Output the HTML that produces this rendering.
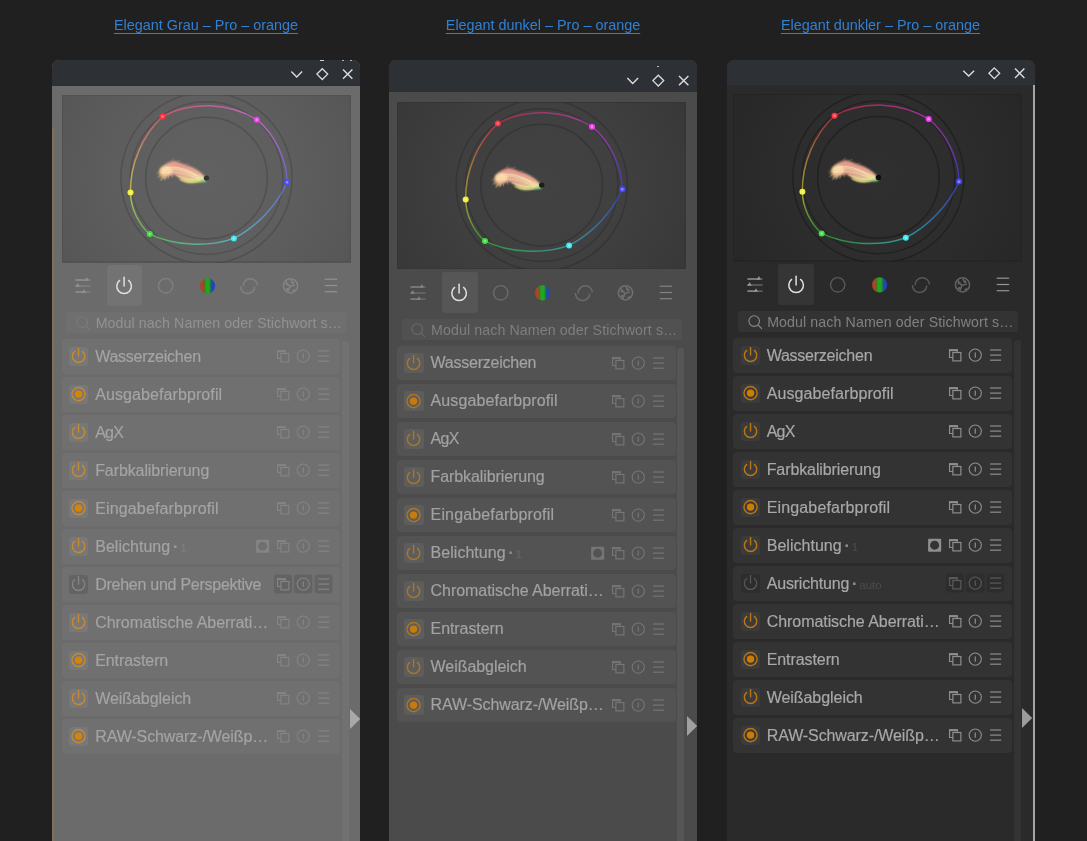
<!DOCTYPE html><html lang="de"><head><meta charset="utf-8"><title>darktable themes</title><style>
html,body{margin:0;padding:0}
body{width:1087px;height:841px;overflow:hidden;position:relative;background:#202020;font-family:"Liberation Sans", sans-serif}
.abs{position:absolute}
.cap{position:absolute;top:16.9px;font-size:14.4px;line-height:17px;color:#3080d4;text-decoration:underline;text-decoration-thickness:1px;text-underline-offset:3.1px;white-space:nowrap;transform:translateX(-50%);filter:blur(0.3px)}
.panel{position:absolute;top:59.6px;width:308px;height:790px;border-radius:7px 7px 0 0;overflow:hidden}
.tb{position:absolute;left:0;top:0;width:100%;background:#2d3136}
.content{position:absolute;width:400px;height:900px;filter:blur(0.3px)}
.tbi{}
.hist{position:absolute;display:block}
.lbl{font-size:16px;line-height:20px;white-space:nowrap;-webkit-text-stroke:0.18px currentColor}
.sub{font-size:11.5px;letter-spacing:0;margin-left:-0.6px}
.dot{font-family:'DejaVu Sans',sans-serif;font-size:13px;letter-spacing:-0.75px;font-weight:bold;position:relative;top:-1.2px;margin-left:-1.2px}
.stxt{font-size:14.2px;line-height:17px;white-space:nowrap;letter-spacing:0.1px}
svg{overflow:visible}
</style></head><body><a class="cap" style="left:206px">Elegant Grau – Pro – orange</a><a class="cap" style="left:543px">Elegant dunkel – Pro – orange</a><a class="cap" style="left:880.5px">Elegant dunkler – Pro – orange</a><div class="panel" style="left:52px;background:#6b6b6b"><div class="tb" style="height:26.0px"></div><svg class="abs tbi" style="left:230px;top:0" width="78" height="26.0" viewBox="230 0 78 26.0"><path d="M239.3 11.5L244.7 16.9L250.1 11.5" fill="none" stroke="#dcdcdc" stroke-width="1.4"/><path d="M270.3 8.7L275.7 14.1L270.3 19.5L264.9 14.1Z" fill="none" stroke="#dcdcdc" stroke-width="1.3"/><path d="M291 9.399999999999999L300.4 18.8M300.4 9.399999999999999L291 18.8" fill="none" stroke="#dcdcdc" stroke-width="1.4"/></svg><div class="content" style="left:-52px;top:-59.6px"><svg class="hist" width="288.8" height="167.3" viewBox="0 0 288.8 167.3" style="left:61.8px;top:95.3px;background:#555555;overflow:hidden"><defs><radialGradient id="hg1" cx="0.500" cy="0.497" r="0.62" gradientTransform="translate(0 -0.361) scale(1 1.726)"><stop offset="0" stop-color="#616161"/><stop offset="0.45" stop-color="#616161" stop-opacity="0.8"/><stop offset="1" stop-color="#616161" stop-opacity="0"/></radialGradient><linearGradient id="g1_0" gradientUnits="userSpaceOnUse" x1="100.6" y1="21.4" x2="194.8" y2="24.7"><stop offset="0" stop-color="#ff5a74"/><stop offset="1" stop-color="#f26cf2"/></linearGradient><linearGradient id="g1_1" gradientUnits="userSpaceOnUse" x1="194.8" y1="24.7" x2="225.1" y2="87.3"><stop offset="0" stop-color="#f26cf2"/><stop offset="1" stop-color="#6c6cff"/></linearGradient><linearGradient id="g1_2" gradientUnits="userSpaceOnUse" x1="225.1" y1="87.3" x2="171.9" y2="143.4"><stop offset="0" stop-color="#6c6cff"/><stop offset="1" stop-color="#5ce2f0"/></linearGradient><linearGradient id="g1_3" gradientUnits="userSpaceOnUse" x1="171.9" y1="143.4" x2="87.8" y2="139.1"><stop offset="0" stop-color="#5ce2f0"/><stop offset="1" stop-color="#5ce05c"/></linearGradient><linearGradient id="g1_4" gradientUnits="userSpaceOnUse" x1="87.8" y1="139.1" x2="68.5" y2="97.4"><stop offset="0" stop-color="#5ce05c"/><stop offset="1" stop-color="#f0f05c"/></linearGradient><linearGradient id="g1_5" gradientUnits="userSpaceOnUse" x1="68.5" y1="97.4" x2="100.6" y2="21.4"><stop offset="0" stop-color="#f0f05c"/><stop offset="1" stop-color="#ff5a74"/></linearGradient><filter id="bl1" x="-30%" y="-30%" width="160%" height="160%"><feGaussianBlur stdDeviation="1.1"/></filter><filter id="bs1" x="-30%" y="-30%" width="160%" height="160%"><feGaussianBlur stdDeviation="1"/></filter><filter id="bc1" x="-10%" y="-10%" width="120%" height="120%"><feGaussianBlur stdDeviation="0.4"/></filter></defs><rect width="288.8" height="167.3" fill="url(#hg1)"/><rect x="0.5" y="0.5" width="287.8" height="166.3" fill="none" stroke="#515151"/><circle cx="144.5" cy="83.1" r="60.8" fill="none" stroke="#4a4a4a" stroke-width="1.5" opacity="0.68"/><circle cx="144.5" cy="83.1" r="76.3" fill="none" stroke="#4a4a4a" stroke-width="1.5" opacity="0.68"/><circle cx="144.5" cy="83.1" r="85.6" fill="none" stroke="#4a4a4a" stroke-width="1.5" opacity="0.68"/><g filter="url(#bc1)" opacity="0.62"><path d="M100.6 21.4C129.4 6.1 167.1 7.5 194.8 24.7" fill="none" stroke="url(#g1_0)" stroke-width="1.5"/><path d="M194.8 24.7C212.7 39.2 224.8 64.3 225.1 87.3" fill="none" stroke="url(#g1_1)" stroke-width="1.5"/><path d="M225.1 87.3C215.3 110.0 194.1 132.4 171.9 143.4" fill="none" stroke="url(#g1_2)" stroke-width="1.5"/><path d="M171.9 143.4C146.1 152.6 112.5 150.9 87.8 139.1" fill="none" stroke="url(#g1_3)" stroke-width="1.5"/><path d="M87.8 139.1C76.3 129.2 68.6 112.5 68.5 97.4" fill="none" stroke="url(#g1_4)" stroke-width="1.5"/><path d="M68.5 97.4C67.7 70.2 80.5 39.8 100.6 21.4" fill="none" stroke="url(#g1_5)" stroke-width="1.5"/></g><circle cx="100.6" cy="21.4" r="3" fill="#ff3040" filter="url(#bc1)"/><circle cx="100.6" cy="21.4" r="1.2" fill="#fff" opacity="0.4" filter="url(#bc1)"/><circle cx="194.8" cy="24.7" r="3" fill="#f040f0" filter="url(#bc1)"/><circle cx="194.8" cy="24.7" r="1.2" fill="#fff" opacity="0.4" filter="url(#bc1)"/><circle cx="225.1" cy="87.3" r="3" fill="#4848ff" filter="url(#bc1)"/><circle cx="225.1" cy="87.3" r="1.2" fill="#fff" opacity="0.4" filter="url(#bc1)"/><circle cx="171.9" cy="143.4" r="3" fill="#40e8f0" filter="url(#bc1)"/><circle cx="171.9" cy="143.4" r="1.2" fill="#fff" opacity="0.4" filter="url(#bc1)"/><circle cx="87.8" cy="139.1" r="3" fill="#40e040" filter="url(#bc1)"/><circle cx="87.8" cy="139.1" r="1.2" fill="#fff" opacity="0.4" filter="url(#bc1)"/><circle cx="68.5" cy="97.4" r="3" fill="#f0f040" filter="url(#bc1)"/><circle cx="68.5" cy="97.4" r="1.2" fill="#fff" opacity="0.4" filter="url(#bc1)"/><linearGradient id="bg1" gradientUnits="userSpaceOnUse" x1="-6" y1="-19" x2="4" y2="6"><stop offset="0" stop-color="#f0a593"/><stop offset="0.40" stop-color="#f5c19e"/><stop offset="0.66" stop-color="#f8e4a6"/><stop offset="0.86" stop-color="#e0e678"/><stop offset="1" stop-color="#b4e070"/></linearGradient><g transform="translate(144.5 83.1) scale(0.985 0.93)"><g filter="url(#bl1)"><path d="M-1.5 -1.5C-6 -6 -12 -11.5 -20 -13.6C-26 -15.6 -30 -18.6 -34.6 -18.4C-40 -16.6 -44 -13.6 -45.6 -11.4C-47.5 -9 -48 -7 -47.5 -5.5C-46 -3 -45 -1 -44 0.3C-42.5 0 -41 -0.6 -39.7 -1.2C-37 -2.6 -35 -3.2 -32.4 -3.2C-30 -2.2 -28 -0.6 -27.2 0.5C-25 2.8 -22 4.6 -19.9 4.8C-18 5.1 -16 5.2 -14.7 5.1C-11 4.6 -8 3.9 -5.2 3.4C-3 3.1 -1 2.8 0 2.5Z" fill="url(#bg1)" opacity="0.88"/></g><g filter="url(#bs1)"><path d="M-50.5 -5.8C-48 -3.5 -47 0 -46.4 1.8C-44 1.4 -42 0.5 -40 -0.5L-45 -9Z" fill="#e8c27c" opacity="0.42"/><ellipse cx="-41" cy="-8" rx="6.5" ry="5" fill="#f9dca6" opacity="0.85"/><path d="M-44 -8.5C-34 -12.5 -22 -9 -4 0.6" fill="none" stroke="#fdeab4" stroke-width="2.4" opacity="0.75" stroke-linecap="round"/><path d="M-40 -13.5C-30 -16.5 -18 -11.5 -6 -3.2" fill="none" stroke="#f3a795" stroke-width="2.4" opacity="0.62" stroke-linecap="round"/><path d="M-26 0.5C-20 4.2 -12 4.4 -3 2.2" fill="none" stroke="#dde872" stroke-width="1.9" opacity="0.72" stroke-linecap="round"/><ellipse cx="-3.6" cy="3" rx="3.2" ry="1.1" fill="#5fd890" opacity="0.95"/></g><g filter="url(#bc1)" fill="none" stroke-linecap="round"><path d="M-37 -15.5C-28 -15.5 -18 -11 -9 -4.5" stroke="#e8907c" stroke-width="0.9" opacity="0.5"/><path d="M-42 -11C-32 -13.5 -22 -10.5 -10 -2.5" stroke="#fff2cc" stroke-width="0.9" opacity="0.55"/><path d="M-45.5 -5.5C-36 -8.5 -24 -6 -7 1.2" stroke="#fff0c0" stroke-width="0.9" opacity="0.5"/><path d="M-30 -2.5C-24 0 -16 2.4 -6 2" stroke="#f4e690" stroke-width="0.9" opacity="0.6"/><path d="M-27 1.8C-22 4.6 -15 5.6 -8 4.2" stroke="#c4e060" stroke-width="0.9" opacity="0.6"/><path d="M-46 -3.5L-49.5 -1M-44.5 -0.5L-46.5 2.6M-41.5 -1L-42.5 2M-38.5 -1.6L-39 1M-35 -3L-34.6 -0.8" stroke="#e6c884" stroke-width="0.9" opacity="0.45"/><path d="M-36 -18.6L-33.5 -21.5M-30 -18L-26.5 -19.6M-22 -14.6L-18.5 -15.4" stroke="#f0b098" stroke-width="0.8" opacity="0.3"/></g></g><circle cx="144.5" cy="83.1" r="2.7" fill="#363636" filter="url(#bc1)"/></svg><div class="abs" style="left:106.6px;top:265.2px;width:35.5px;height:41.2px;border-radius:3px;background:#737373"></div><svg class="abs" style="left:62px;top:265px" width="289" height="42" viewBox="62 265 289 42"><path d="M75.4 280.0H86.9" stroke="#929292" stroke-width="1.5"/><path d="M86.9 280.0H90.6" stroke="#929292" stroke-width="1.1" opacity="0.75"/><path d="M84.80000000000001 280.7L86.9 277.1L89.0 280.7Z" fill="#929292"/><path d="M75.4 286.0H77.7" stroke="#929292" stroke-width="1.5"/><path d="M77.7 286.0H90.6" stroke="#929292" stroke-width="1.1" opacity="0.75"/><path d="M75.60000000000001 286.7L77.7 283.1L79.8 286.7Z" fill="#929292"/><path d="M75.4 292.1H84.0" stroke="#929292" stroke-width="1.5"/><path d="M84.0 292.1H90.6" stroke="#929292" stroke-width="1.1" opacity="0.75"/><path d="M81.9 292.8L84.0 289.20000000000005L86.1 292.8Z" fill="#929292"/><path d="M119.61 280.45A7.3 7.3 0 1 0 128.59 280.45" fill="none" stroke="#e0e0e0" stroke-width="1.5" stroke-linecap="round"/><path d="M124.1 277.30V285.90" stroke="#e0e0e0" stroke-width="1.5" stroke-linecap="round"/><circle cx="165.7" cy="285.8" r="7.2" fill="none" stroke="#808080" stroke-width="1.35"/><defs><linearGradient id="rgb" x1="0" x2="1" y1="0" y2="0"><stop offset="0" stop-color="#b83a2a"/><stop offset="0.16" stop-color="#b04424"/><stop offset="0.29" stop-color="#586c20"/><stop offset="0.40" stop-color="#22a422"/><stop offset="0.60" stop-color="#22a42a"/><stop offset="0.72" stop-color="#206458"/><stop offset="0.83" stop-color="#2444b8"/><stop offset="1" stop-color="#2a40c8"/></linearGradient></defs><circle cx="207.6" cy="285.8" r="7.6" fill="url(#rgb)"/><path d="M243.1 286.40000000000003A7.2 7.2 0 0 1 257.5 285.40000000000003" fill="none" stroke="#808080" stroke-width="1.5"/><path d="M240.4 286.0A7.2 7.2 0 0 0 254.8 286.6" fill="none" stroke="#808080" stroke-width="1.5"/><circle cx="290.5" cy="285.8" r="7.1" fill="none" stroke="#848484" stroke-width="1.5"/><path d="M285.5 281.2L289.9 286.40000000000003M289.9 286.40000000000003L287.9 291.8M289.9 286.40000000000003L294.9 285.0M291.1 279.40000000000003L292.3 283.2M295.1 289.40000000000003L292.5 291.40000000000003" fill="none" stroke="#848484" stroke-width="1.5"/><circle cx="287.3" cy="289.2" r="1.5" fill="#848484"/><circle cx="293.1" cy="282.8" r="1.4" fill="#848484"/><circle cx="286.9" cy="284.2" r="1.2" fill="#848484"/><path d="M324.7 279.2H337.2" stroke="#929292" stroke-width="1.2"/><path d="M324.7 285.5H337.2" stroke="#929292" stroke-width="1.2"/><path d="M324.7 291.7H337.2" stroke="#929292" stroke-width="1.2"/></svg><div class="abs" style="left:66.3px;top:312.3px;width:279.9px;height:21px;border-radius:3px;background:#6f6f6f"></div><svg class="abs" style="left:74px;top:314px" width="20" height="20" viewBox="74 314 20 20"><circle cx="82.2" cy="322.1" r="5.3" fill="none" stroke="#7b7b7b" stroke-width="1.1"/><path d="M86 326L90 329.8" stroke="#7b7b7b" stroke-width="1.1"/></svg><div class="abs stxt" style="left:95.7px;top:315.3px;color:#929292">Modul nach Namen oder Stichwort s…</div><div class="abs" style="left:61.9px;top:339.4px;width:278.5px;height:34.2px;border-radius:4px;background:#707070"></div><div class="abs" style="left:69px;top:346.7px;width:19.2px;height:19.6px;border-radius:3px;background:#787878"></div><svg class="abs" style="left:62px;top:339.4px" width="279" height="34.2" viewBox="62 339.4 279 34.2"><path d="M74.68 351.81A6.2 6.2 0 1 0 82.32 351.81" fill="none" stroke="#c58a33" stroke-width="1.4" stroke-linecap="round"/><path d="M78.5 348.90V356.40" stroke="#c58a33" stroke-width="1.4" stroke-linecap="round"/><path d="M280.9 358.9H277.6V351.3H285.2V353.3" fill="none" stroke="#848484" stroke-width="1.2"/><path d="M277 351.6H285.8" stroke="#848484" stroke-width="1.9"/><rect x="280.9" y="353.9" width="8" height="8.4" fill="none" stroke="#848484" stroke-width="1.2"/><circle cx="303.3" cy="356.5" r="6.1" fill="none" stroke="#848484" stroke-width="1.1"/><path d="M303.3 353.9V359.1" stroke="#848484" stroke-width="1.2"/><path d="M318.1 351.4H329.2" stroke="#848484" stroke-width="1.2"/><path d="M318.1 356.5H329.2" stroke="#848484" stroke-width="1.2"/><path d="M318.1 361.6H329.2" stroke="#848484" stroke-width="1.2"/></svg><div class="abs lbl" style="left:95.2px;top:347.0px;color:#a4a4a4;letter-spacing:-0.245px">Wasserzeichen</div><div class="abs" style="left:61.9px;top:377.4px;width:278.5px;height:34.2px;border-radius:4px;background:#707070"></div><div class="abs" style="left:69px;top:384.7px;width:19.2px;height:19.6px;border-radius:3px;background:#787878"></div><svg class="abs" style="left:62px;top:377.4px" width="279" height="34.2" viewBox="62 377.4 279 34.2"><circle cx="78.5" cy="394.5" r="6.6" fill="none" stroke="#c58a33" stroke-width="1.4"/><circle cx="78.5" cy="394.5" r="3.7" fill="#d88400"/><path d="M280.9 396.9H277.6V389.3H285.2V391.3" fill="none" stroke="#848484" stroke-width="1.2"/><path d="M277 389.6H285.8" stroke="#848484" stroke-width="1.9"/><rect x="280.9" y="391.9" width="8" height="8.4" fill="none" stroke="#848484" stroke-width="1.2"/><circle cx="303.3" cy="394.5" r="6.1" fill="none" stroke="#848484" stroke-width="1.1"/><path d="M303.3 391.9V397.1" stroke="#848484" stroke-width="1.2"/><path d="M318.1 389.4H329.2" stroke="#848484" stroke-width="1.2"/><path d="M318.1 394.5H329.2" stroke="#848484" stroke-width="1.2"/><path d="M318.1 399.6H329.2" stroke="#848484" stroke-width="1.2"/></svg><div class="abs lbl" style="left:95.2px;top:385.0px;color:#a4a4a4;letter-spacing:0.093px">Ausgabefarbprofil</div><div class="abs" style="left:61.9px;top:415.4px;width:278.5px;height:34.2px;border-radius:4px;background:#707070"></div><div class="abs" style="left:69px;top:422.7px;width:19.2px;height:19.6px;border-radius:3px;background:#787878"></div><svg class="abs" style="left:62px;top:415.4px" width="279" height="34.2" viewBox="62 415.4 279 34.2"><path d="M74.68 427.81A6.2 6.2 0 1 0 82.32 427.81" fill="none" stroke="#c58a33" stroke-width="1.4" stroke-linecap="round"/><path d="M78.5 424.90V432.40" stroke="#c58a33" stroke-width="1.4" stroke-linecap="round"/><path d="M280.9 434.9H277.6V427.3H285.2V429.3" fill="none" stroke="#848484" stroke-width="1.2"/><path d="M277 427.6H285.8" stroke="#848484" stroke-width="1.9"/><rect x="280.9" y="429.9" width="8" height="8.4" fill="none" stroke="#848484" stroke-width="1.2"/><circle cx="303.3" cy="432.5" r="6.1" fill="none" stroke="#848484" stroke-width="1.1"/><path d="M303.3 429.9V435.1" stroke="#848484" stroke-width="1.2"/><path d="M318.1 427.4H329.2" stroke="#848484" stroke-width="1.2"/><path d="M318.1 432.5H329.2" stroke="#848484" stroke-width="1.2"/><path d="M318.1 437.6H329.2" stroke="#848484" stroke-width="1.2"/></svg><div class="abs lbl" style="left:95.2px;top:423.0px;color:#a4a4a4;letter-spacing:-0.750px">AgX</div><div class="abs" style="left:61.9px;top:453.4px;width:278.5px;height:34.2px;border-radius:4px;background:#707070"></div><div class="abs" style="left:69px;top:460.7px;width:19.2px;height:19.6px;border-radius:3px;background:#787878"></div><svg class="abs" style="left:62px;top:453.4px" width="279" height="34.2" viewBox="62 453.4 279 34.2"><path d="M74.68 465.81A6.2 6.2 0 1 0 82.32 465.81" fill="none" stroke="#c58a33" stroke-width="1.4" stroke-linecap="round"/><path d="M78.5 462.90V470.40" stroke="#c58a33" stroke-width="1.4" stroke-linecap="round"/><path d="M280.9 472.9H277.6V465.3H285.2V467.3" fill="none" stroke="#848484" stroke-width="1.2"/><path d="M277 465.6H285.8" stroke="#848484" stroke-width="1.9"/><rect x="280.9" y="467.9" width="8" height="8.4" fill="none" stroke="#848484" stroke-width="1.2"/><circle cx="303.3" cy="470.5" r="6.1" fill="none" stroke="#848484" stroke-width="1.1"/><path d="M303.3 467.9V473.1" stroke="#848484" stroke-width="1.2"/><path d="M318.1 465.4H329.2" stroke="#848484" stroke-width="1.2"/><path d="M318.1 470.5H329.2" stroke="#848484" stroke-width="1.2"/><path d="M318.1 475.6H329.2" stroke="#848484" stroke-width="1.2"/></svg><div class="abs lbl" style="left:95.2px;top:461.0px;color:#a4a4a4;letter-spacing:-0.101px">Farbkalibrierung</div><div class="abs" style="left:61.9px;top:491.4px;width:278.5px;height:34.2px;border-radius:4px;background:#707070"></div><div class="abs" style="left:69px;top:498.7px;width:19.2px;height:19.6px;border-radius:3px;background:#787878"></div><svg class="abs" style="left:62px;top:491.4px" width="279" height="34.2" viewBox="62 491.4 279 34.2"><circle cx="78.5" cy="508.5" r="6.6" fill="none" stroke="#c58a33" stroke-width="1.4"/><circle cx="78.5" cy="508.5" r="3.7" fill="#d88400"/><path d="M280.9 510.9H277.6V503.3H285.2V505.3" fill="none" stroke="#848484" stroke-width="1.2"/><path d="M277 503.6H285.8" stroke="#848484" stroke-width="1.9"/><rect x="280.9" y="505.9" width="8" height="8.4" fill="none" stroke="#848484" stroke-width="1.2"/><circle cx="303.3" cy="508.5" r="6.1" fill="none" stroke="#848484" stroke-width="1.1"/><path d="M303.3 505.9V511.1" stroke="#848484" stroke-width="1.2"/><path d="M318.1 503.4H329.2" stroke="#848484" stroke-width="1.2"/><path d="M318.1 508.5H329.2" stroke="#848484" stroke-width="1.2"/><path d="M318.1 513.6H329.2" stroke="#848484" stroke-width="1.2"/></svg><div class="abs lbl" style="left:95.2px;top:499.0px;color:#a4a4a4;letter-spacing:0.149px">Eingabefarbprofil</div><div class="abs" style="left:61.9px;top:529.4px;width:278.5px;height:34.2px;border-radius:4px;background:#707070"></div><div class="abs" style="left:69px;top:536.7px;width:19.2px;height:19.6px;border-radius:3px;background:#787878"></div><svg class="abs" style="left:62px;top:529.4px" width="279" height="34.2" viewBox="62 529.4 279 34.2"><path d="M74.68 541.81A6.2 6.2 0 1 0 82.32 541.81" fill="none" stroke="#c58a33" stroke-width="1.4" stroke-linecap="round"/><path d="M78.5 538.90V546.40" stroke="#c58a33" stroke-width="1.4" stroke-linecap="round"/><rect x="256.1" y="540.1" width="13.1" height="13" rx="1" fill="#848484"/><circle cx="262.65" cy="546.6" r="4.5" fill="#707070"/><path d="M280.9 548.9H277.6V541.3H285.2V543.3" fill="none" stroke="#848484" stroke-width="1.2"/><path d="M277 541.6H285.8" stroke="#848484" stroke-width="1.9"/><rect x="280.9" y="543.9" width="8" height="8.4" fill="none" stroke="#848484" stroke-width="1.2"/><circle cx="303.3" cy="546.5" r="6.1" fill="none" stroke="#848484" stroke-width="1.1"/><path d="M303.3 543.9V549.1" stroke="#848484" stroke-width="1.2"/><path d="M318.1 541.4H329.2" stroke="#848484" stroke-width="1.2"/><path d="M318.1 546.5H329.2" stroke="#848484" stroke-width="1.2"/><path d="M318.1 551.6H329.2" stroke="#848484" stroke-width="1.2"/></svg><div class="abs lbl" style="left:95.2px;top:537.0px;color:#a4a4a4;letter-spacing:0.028px">Belichtung<span class="dot" style="color:#9a9a9a"> · </span><span class="sub" style="color:#7e7e7e">1</span></div><div class="abs" style="left:61.9px;top:567.4px;width:278.5px;height:34.2px;border-radius:4px;background:#707070"></div><div class="abs" style="left:69px;top:574.7px;width:19.2px;height:19.6px;border-radius:3px;background:#636363"></div><svg class="abs" style="left:62px;top:567.4px" width="279" height="34.2" viewBox="62 567.4 279 34.2"><path d="M74.68 579.81A6.2 6.2 0 1 0 82.32 579.81" fill="none" stroke="#858585" stroke-width="1.3" stroke-linecap="round"/><path d="M78.5 576.90V584.40" stroke="#858585" stroke-width="1.3" stroke-linecap="round"/><rect x="274" y="575.0" width="18" height="18.8" rx="2.5" fill="#636363"/><rect x="294.1" y="575.0" width="18.2" height="18.8" rx="2.5" fill="#636363"/><rect x="314.8" y="575.0" width="17.7" height="18.8" rx="2.5" fill="#636363"/><path d="M280.9 586.9H277.6V579.3H285.2V581.3" fill="none" stroke="#848484" stroke-width="1.2"/><path d="M277 579.6H285.8" stroke="#848484" stroke-width="1.9"/><rect x="280.9" y="581.9" width="8" height="8.4" fill="none" stroke="#848484" stroke-width="1.2"/><circle cx="303.3" cy="584.5" r="6.1" fill="none" stroke="#848484" stroke-width="1.1"/><path d="M303.3 581.9V587.1" stroke="#848484" stroke-width="1.2"/><path d="M318.1 579.4H329.2" stroke="#848484" stroke-width="1.2"/><path d="M318.1 584.5H329.2" stroke="#848484" stroke-width="1.2"/><path d="M318.1 589.6H329.2" stroke="#848484" stroke-width="1.2"/></svg><div class="abs lbl" style="left:95.2px;top:575.0px;color:#a4a4a4;letter-spacing:-0.257px">Drehen und Perspektive</div><div class="abs" style="left:61.9px;top:605.4px;width:278.5px;height:34.2px;border-radius:4px;background:#707070"></div><div class="abs" style="left:69px;top:612.7px;width:19.2px;height:19.6px;border-radius:3px;background:#787878"></div><svg class="abs" style="left:62px;top:605.4px" width="279" height="34.2" viewBox="62 605.4 279 34.2"><path d="M74.68 617.81A6.2 6.2 0 1 0 82.32 617.81" fill="none" stroke="#c58a33" stroke-width="1.4" stroke-linecap="round"/><path d="M78.5 614.90V622.40" stroke="#c58a33" stroke-width="1.4" stroke-linecap="round"/><path d="M280.9 624.9H277.6V617.3H285.2V619.3" fill="none" stroke="#848484" stroke-width="1.2"/><path d="M277 617.6H285.8" stroke="#848484" stroke-width="1.9"/><rect x="280.9" y="619.9" width="8" height="8.4" fill="none" stroke="#848484" stroke-width="1.2"/><circle cx="303.3" cy="622.5" r="6.1" fill="none" stroke="#848484" stroke-width="1.1"/><path d="M303.3 619.9V625.1" stroke="#848484" stroke-width="1.2"/><path d="M318.1 617.4H329.2" stroke="#848484" stroke-width="1.2"/><path d="M318.1 622.5H329.2" stroke="#848484" stroke-width="1.2"/><path d="M318.1 627.6H329.2" stroke="#848484" stroke-width="1.2"/></svg><div class="abs lbl" style="left:95.2px;top:613.0px;color:#a4a4a4;letter-spacing:-0.059px">Chromatische Aberrati…</div><div class="abs" style="left:61.9px;top:643.4px;width:278.5px;height:34.2px;border-radius:4px;background:#707070"></div><div class="abs" style="left:69px;top:650.7px;width:19.2px;height:19.6px;border-radius:3px;background:#787878"></div><svg class="abs" style="left:62px;top:643.4px" width="279" height="34.2" viewBox="62 643.4 279 34.2"><circle cx="78.5" cy="660.5" r="6.6" fill="none" stroke="#c58a33" stroke-width="1.4"/><circle cx="78.5" cy="660.5" r="3.7" fill="#d88400"/><path d="M280.9 662.9H277.6V655.3H285.2V657.3" fill="none" stroke="#848484" stroke-width="1.2"/><path d="M277 655.6H285.8" stroke="#848484" stroke-width="1.9"/><rect x="280.9" y="657.9" width="8" height="8.4" fill="none" stroke="#848484" stroke-width="1.2"/><circle cx="303.3" cy="660.5" r="6.1" fill="none" stroke="#848484" stroke-width="1.1"/><path d="M303.3 657.9V663.1" stroke="#848484" stroke-width="1.2"/><path d="M318.1 655.4H329.2" stroke="#848484" stroke-width="1.2"/><path d="M318.1 660.5H329.2" stroke="#848484" stroke-width="1.2"/><path d="M318.1 665.6H329.2" stroke="#848484" stroke-width="1.2"/></svg><div class="abs lbl" style="left:95.2px;top:651.0px;color:#a4a4a4;letter-spacing:-0.081px">Entrastern</div><div class="abs" style="left:61.9px;top:681.4px;width:278.5px;height:34.2px;border-radius:4px;background:#707070"></div><div class="abs" style="left:69px;top:688.7px;width:19.2px;height:19.6px;border-radius:3px;background:#787878"></div><svg class="abs" style="left:62px;top:681.4px" width="279" height="34.2" viewBox="62 681.4 279 34.2"><path d="M74.68 693.81A6.2 6.2 0 1 0 82.32 693.81" fill="none" stroke="#c58a33" stroke-width="1.4" stroke-linecap="round"/><path d="M78.5 690.90V698.40" stroke="#c58a33" stroke-width="1.4" stroke-linecap="round"/><path d="M280.9 700.9H277.6V693.3H285.2V695.3" fill="none" stroke="#848484" stroke-width="1.2"/><path d="M277 693.6H285.8" stroke="#848484" stroke-width="1.9"/><rect x="280.9" y="695.9" width="8" height="8.4" fill="none" stroke="#848484" stroke-width="1.2"/><circle cx="303.3" cy="698.5" r="6.1" fill="none" stroke="#848484" stroke-width="1.1"/><path d="M303.3 695.9V701.1" stroke="#848484" stroke-width="1.2"/><path d="M318.1 693.4H329.2" stroke="#848484" stroke-width="1.2"/><path d="M318.1 698.5H329.2" stroke="#848484" stroke-width="1.2"/><path d="M318.1 703.6H329.2" stroke="#848484" stroke-width="1.2"/></svg><div class="abs lbl" style="left:95.2px;top:689.0px;color:#a4a4a4;letter-spacing:-0.053px">Weißabgleich</div><div class="abs" style="left:61.9px;top:719.4px;width:278.5px;height:34.2px;border-radius:4px;background:#707070"></div><div class="abs" style="left:69px;top:726.7px;width:19.2px;height:19.6px;border-radius:3px;background:#787878"></div><svg class="abs" style="left:62px;top:719.4px" width="279" height="34.2" viewBox="62 719.4 279 34.2"><circle cx="78.5" cy="736.5" r="6.6" fill="none" stroke="#c58a33" stroke-width="1.4"/><circle cx="78.5" cy="736.5" r="3.7" fill="#d88400"/><path d="M280.9 738.9H277.6V731.3H285.2V733.3" fill="none" stroke="#848484" stroke-width="1.2"/><path d="M277 731.6H285.8" stroke="#848484" stroke-width="1.9"/><rect x="280.9" y="733.9" width="8" height="8.4" fill="none" stroke="#848484" stroke-width="1.2"/><circle cx="303.3" cy="736.5" r="6.1" fill="none" stroke="#848484" stroke-width="1.1"/><path d="M303.3 733.9V739.1" stroke="#848484" stroke-width="1.2"/><path d="M318.1 731.4H329.2" stroke="#848484" stroke-width="1.2"/><path d="M318.1 736.5H329.2" stroke="#848484" stroke-width="1.2"/><path d="M318.1 741.6H329.2" stroke="#848484" stroke-width="1.2"/></svg><div class="abs lbl" style="left:95.2px;top:727.0px;color:#a4a4a4;letter-spacing:-0.097px">RAW-Schwarz-/Weißp…</div><div class="abs" style="left:342px;top:341px;width:7px;height:520px;border-radius:3px;background:#717171"></div><svg class="abs" style="left:349.0px;top:706px" width="12" height="26" viewBox="349 706 12 26"><path d="M350 709L360.2 719L350 729Z" fill="#a9a9a9"/></svg></div><div class="abs" style="left:268.2px;top:0;width:3.4px;height:1.3px;background:#fff;opacity:.8;filter:blur(.3px)"></div><div class="abs" style="left:289.9px;top:0;width:2px;height:1.2px;background:#fff;opacity:.65;filter:blur(.3px)"></div><div class="abs" style="left:297.6px;top:0;width:2.6px;height:1.2px;background:#fff;opacity:.65;filter:blur(.3px)"></div><div class="abs" style="left:0;top:69px;width:1.8px;height:720px;background:#80705a"></div></div><div class="panel" style="left:388.8px;background:#4b4b4b"><div class="tb" style="height:32.2px"></div><svg class="abs tbi" style="left:229.1px;top:0" width="78" height="32.2" viewBox="230 0 78 32.2"><path d="M239.3 18.0L244.7 23.400000000000002L250.1 18.0" fill="none" stroke="#dcdcdc" stroke-width="1.4"/><path d="M270.3 15.200000000000001L275.7 20.6L270.3 26.0L264.9 20.6Z" fill="none" stroke="#dcdcdc" stroke-width="1.3"/><path d="M291 15.900000000000002L300.4 25.3M300.4 15.900000000000002L291 25.3" fill="none" stroke="#dcdcdc" stroke-width="1.4"/></svg><div class="content" style="left:-53.4px;top:-53.1px"><svg class="hist" width="288.8" height="167.3" viewBox="0 0 288.8 167.3" style="left:61.8px;top:95.3px;background:#373737;overflow:hidden"><defs><radialGradient id="hg2" cx="0.501" cy="0.497" r="0.62" gradientTransform="translate(0 -0.361) scale(1 1.726)"><stop offset="0" stop-color="#424242"/><stop offset="0.45" stop-color="#424242" stop-opacity="0.8"/><stop offset="1" stop-color="#424242" stop-opacity="0"/></radialGradient><linearGradient id="g2_0" gradientUnits="userSpaceOnUse" x1="100.8" y1="21.4" x2="195.0" y2="24.7"><stop offset="0" stop-color="#f02c44"/><stop offset="1" stop-color="#e838e8"/></linearGradient><linearGradient id="g2_1" gradientUnits="userSpaceOnUse" x1="195.0" y1="24.7" x2="225.3" y2="87.3"><stop offset="0" stop-color="#e838e8"/><stop offset="1" stop-color="#4040f4"/></linearGradient><linearGradient id="g2_2" gradientUnits="userSpaceOnUse" x1="225.3" y1="87.3" x2="172.1" y2="143.4"><stop offset="0" stop-color="#4040f4"/><stop offset="1" stop-color="#30d8e4"/></linearGradient><linearGradient id="g2_3" gradientUnits="userSpaceOnUse" x1="172.1" y1="143.4" x2="88.0" y2="139.1"><stop offset="0" stop-color="#30d8e4"/><stop offset="1" stop-color="#34d434"/></linearGradient><linearGradient id="g2_4" gradientUnits="userSpaceOnUse" x1="88.0" y1="139.1" x2="68.7" y2="97.4"><stop offset="0" stop-color="#34d434"/><stop offset="1" stop-color="#e4e434"/></linearGradient><linearGradient id="g2_5" gradientUnits="userSpaceOnUse" x1="68.7" y1="97.4" x2="100.8" y2="21.4"><stop offset="0" stop-color="#e4e434"/><stop offset="1" stop-color="#f02c44"/></linearGradient><filter id="bl2" x="-30%" y="-30%" width="160%" height="160%"><feGaussianBlur stdDeviation="1.1"/></filter><filter id="bs2" x="-30%" y="-30%" width="160%" height="160%"><feGaussianBlur stdDeviation="1"/></filter><filter id="bc2" x="-10%" y="-10%" width="120%" height="120%"><feGaussianBlur stdDeviation="0.4"/></filter></defs><rect width="288.8" height="167.3" fill="url(#hg2)"/><rect x="0.5" y="0.5" width="287.8" height="166.3" fill="none" stroke="#353535"/><circle cx="144.7" cy="83.1" r="60.8" fill="none" stroke="#303030" stroke-width="1.5" opacity="0.68"/><circle cx="144.7" cy="83.1" r="76.3" fill="none" stroke="#303030" stroke-width="1.5" opacity="0.68"/><circle cx="144.7" cy="83.1" r="85.6" fill="none" stroke="#303030" stroke-width="1.5" opacity="0.68"/><g filter="url(#bc2)" opacity="0.55"><path d="M100.8 21.4C129.6 6.1 167.3 7.5 195.0 24.7" fill="none" stroke="url(#g2_0)" stroke-width="1.5"/><path d="M195.0 24.7C212.9 39.2 225.0 64.3 225.3 87.3" fill="none" stroke="url(#g2_1)" stroke-width="1.5"/><path d="M225.3 87.3C215.5 110.0 194.3 132.4 172.1 143.4" fill="none" stroke="url(#g2_2)" stroke-width="1.5"/><path d="M172.1 143.4C146.3 152.6 112.7 150.9 88.0 139.1" fill="none" stroke="url(#g2_3)" stroke-width="1.5"/><path d="M88.0 139.1C76.5 129.2 68.8 112.5 68.7 97.4" fill="none" stroke="url(#g2_4)" stroke-width="1.5"/><path d="M68.7 97.4C67.9 70.2 80.7 39.8 100.8 21.4" fill="none" stroke="url(#g2_5)" stroke-width="1.5"/></g><circle cx="100.8" cy="21.4" r="3" fill="#ff3040" filter="url(#bc2)"/><circle cx="100.8" cy="21.4" r="1.2" fill="#fff" opacity="0.4" filter="url(#bc2)"/><circle cx="195.0" cy="24.7" r="3" fill="#f040f0" filter="url(#bc2)"/><circle cx="195.0" cy="24.7" r="1.2" fill="#fff" opacity="0.4" filter="url(#bc2)"/><circle cx="225.3" cy="87.3" r="3" fill="#4848ff" filter="url(#bc2)"/><circle cx="225.3" cy="87.3" r="1.2" fill="#fff" opacity="0.4" filter="url(#bc2)"/><circle cx="172.1" cy="143.4" r="3" fill="#40e8f0" filter="url(#bc2)"/><circle cx="172.1" cy="143.4" r="1.2" fill="#fff" opacity="0.4" filter="url(#bc2)"/><circle cx="88.0" cy="139.1" r="3" fill="#40e040" filter="url(#bc2)"/><circle cx="88.0" cy="139.1" r="1.2" fill="#fff" opacity="0.4" filter="url(#bc2)"/><circle cx="68.7" cy="97.4" r="3" fill="#f0f040" filter="url(#bc2)"/><circle cx="68.7" cy="97.4" r="1.2" fill="#fff" opacity="0.4" filter="url(#bc2)"/><linearGradient id="bg2" gradientUnits="userSpaceOnUse" x1="-6" y1="-19" x2="4" y2="6"><stop offset="0" stop-color="#f0a593"/><stop offset="0.40" stop-color="#f5c19e"/><stop offset="0.66" stop-color="#f8e4a6"/><stop offset="0.86" stop-color="#e0e678"/><stop offset="1" stop-color="#b4e070"/></linearGradient><g transform="translate(144.7 83.1) scale(0.985 0.93)"><g filter="url(#bl2)"><path d="M-1.5 -1.5C-6 -6 -12 -11.5 -20 -13.6C-26 -15.6 -30 -18.6 -34.6 -18.4C-40 -16.6 -44 -13.6 -45.6 -11.4C-47.5 -9 -48 -7 -47.5 -5.5C-46 -3 -45 -1 -44 0.3C-42.5 0 -41 -0.6 -39.7 -1.2C-37 -2.6 -35 -3.2 -32.4 -3.2C-30 -2.2 -28 -0.6 -27.2 0.5C-25 2.8 -22 4.6 -19.9 4.8C-18 5.1 -16 5.2 -14.7 5.1C-11 4.6 -8 3.9 -5.2 3.4C-3 3.1 -1 2.8 0 2.5Z" fill="url(#bg2)" opacity="0.88"/></g><g filter="url(#bs2)"><path d="M-50.5 -5.8C-48 -3.5 -47 0 -46.4 1.8C-44 1.4 -42 0.5 -40 -0.5L-45 -9Z" fill="#e8c27c" opacity="0.42"/><ellipse cx="-41" cy="-8" rx="6.5" ry="5" fill="#f9dca6" opacity="0.85"/><path d="M-44 -8.5C-34 -12.5 -22 -9 -4 0.6" fill="none" stroke="#fdeab4" stroke-width="2.4" opacity="0.75" stroke-linecap="round"/><path d="M-40 -13.5C-30 -16.5 -18 -11.5 -6 -3.2" fill="none" stroke="#f3a795" stroke-width="2.4" opacity="0.62" stroke-linecap="round"/><path d="M-26 0.5C-20 4.2 -12 4.4 -3 2.2" fill="none" stroke="#dde872" stroke-width="1.9" opacity="0.72" stroke-linecap="round"/><ellipse cx="-3.6" cy="3" rx="3.2" ry="1.1" fill="#5fd890" opacity="0.95"/></g><g filter="url(#bc2)" fill="none" stroke-linecap="round"><path d="M-37 -15.5C-28 -15.5 -18 -11 -9 -4.5" stroke="#e8907c" stroke-width="0.9" opacity="0.5"/><path d="M-42 -11C-32 -13.5 -22 -10.5 -10 -2.5" stroke="#fff2cc" stroke-width="0.9" opacity="0.55"/><path d="M-45.5 -5.5C-36 -8.5 -24 -6 -7 1.2" stroke="#fff0c0" stroke-width="0.9" opacity="0.5"/><path d="M-30 -2.5C-24 0 -16 2.4 -6 2" stroke="#f4e690" stroke-width="0.9" opacity="0.6"/><path d="M-27 1.8C-22 4.6 -15 5.6 -8 4.2" stroke="#c4e060" stroke-width="0.9" opacity="0.6"/><path d="M-46 -3.5L-49.5 -1M-44.5 -0.5L-46.5 2.6M-41.5 -1L-42.5 2M-38.5 -1.6L-39 1M-35 -3L-34.6 -0.8" stroke="#e6c884" stroke-width="0.9" opacity="0.45"/><path d="M-36 -18.6L-33.5 -21.5M-30 -18L-26.5 -19.6M-22 -14.6L-18.5 -15.4" stroke="#f0b098" stroke-width="0.8" opacity="0.3"/></g></g><circle cx="144.7" cy="83.1" r="2.7" fill="#1b1b1b" filter="url(#bc2)"/></svg><div class="abs" style="left:106.6px;top:265.2px;width:35.5px;height:41.2px;border-radius:3px;background:#565656"></div><svg class="abs" style="left:62px;top:265px" width="289" height="42" viewBox="62 265 289 42"><path d="M75.4 280.0H86.9" stroke="#848484" stroke-width="1.5"/><path d="M86.9 280.0H90.6" stroke="#848484" stroke-width="1.1" opacity="0.75"/><path d="M84.80000000000001 280.7L86.9 277.1L89.0 280.7Z" fill="#848484"/><path d="M75.4 286.0H77.7" stroke="#848484" stroke-width="1.5"/><path d="M77.7 286.0H90.6" stroke="#848484" stroke-width="1.1" opacity="0.75"/><path d="M75.60000000000001 286.7L77.7 283.1L79.8 286.7Z" fill="#848484"/><path d="M75.4 292.1H84.0" stroke="#848484" stroke-width="1.5"/><path d="M84.0 292.1H90.6" stroke="#848484" stroke-width="1.1" opacity="0.75"/><path d="M81.9 292.8L84.0 289.20000000000005L86.1 292.8Z" fill="#848484"/><path d="M119.61 280.45A7.3 7.3 0 1 0 128.59 280.45" fill="none" stroke="#e0e0e0" stroke-width="1.5" stroke-linecap="round"/><path d="M124.1 277.30V285.90" stroke="#e0e0e0" stroke-width="1.5" stroke-linecap="round"/><circle cx="165.7" cy="285.8" r="7.2" fill="none" stroke="#6b6b6b" stroke-width="1.35"/><defs><linearGradient id="rgb" x1="0" x2="1" y1="0" y2="0"><stop offset="0" stop-color="#b83a2a"/><stop offset="0.16" stop-color="#b04424"/><stop offset="0.29" stop-color="#586c20"/><stop offset="0.40" stop-color="#22a422"/><stop offset="0.60" stop-color="#22a42a"/><stop offset="0.72" stop-color="#206458"/><stop offset="0.83" stop-color="#2444b8"/><stop offset="1" stop-color="#2a40c8"/></linearGradient></defs><circle cx="207.6" cy="285.8" r="7.6" fill="url(#rgb)"/><path d="M243.1 286.40000000000003A7.2 7.2 0 0 1 257.5 285.40000000000003" fill="none" stroke="#6b6b6b" stroke-width="1.5"/><path d="M240.4 286.0A7.2 7.2 0 0 0 254.8 286.6" fill="none" stroke="#6b6b6b" stroke-width="1.5"/><circle cx="290.5" cy="285.8" r="7.1" fill="none" stroke="#707070" stroke-width="1.5"/><path d="M285.5 281.2L289.9 286.40000000000003M289.9 286.40000000000003L287.9 291.8M289.9 286.40000000000003L294.9 285.0M291.1 279.40000000000003L292.3 283.2M295.1 289.40000000000003L292.5 291.40000000000003" fill="none" stroke="#707070" stroke-width="1.5"/><circle cx="287.3" cy="289.2" r="1.5" fill="#707070"/><circle cx="293.1" cy="282.8" r="1.4" fill="#707070"/><circle cx="286.9" cy="284.2" r="1.2" fill="#707070"/><path d="M324.7 279.2H337.2" stroke="#848484" stroke-width="1.2"/><path d="M324.7 285.5H337.2" stroke="#848484" stroke-width="1.2"/><path d="M324.7 291.7H337.2" stroke="#848484" stroke-width="1.2"/></svg><div class="abs" style="left:66.3px;top:312.3px;width:279.9px;height:21px;border-radius:3px;background:#515151"></div><svg class="abs" style="left:74px;top:314px" width="20" height="20" viewBox="74 314 20 20"><circle cx="82.2" cy="322.1" r="5.3" fill="none" stroke="#6a6a6a" stroke-width="1.1"/><path d="M86 326L90 329.8" stroke="#6a6a6a" stroke-width="1.1"/></svg><div class="abs stxt" style="left:95.7px;top:315.3px;color:#7e7e7e">Modul nach Namen oder Stichwort s…</div><div class="abs" style="left:61.9px;top:339.4px;width:278.5px;height:34.2px;border-radius:4px;background:#535353"></div><div class="abs" style="left:69px;top:346.7px;width:19.2px;height:19.6px;border-radius:3px;background:#5d5d5d"></div><svg class="abs" style="left:62px;top:339.4px" width="279" height="34.2" viewBox="62 339.4 279 34.2"><path d="M74.68 351.81A6.2 6.2 0 1 0 82.32 351.81" fill="none" stroke="#ac7626" stroke-width="1.4" stroke-linecap="round"/><path d="M78.5 348.90V356.40" stroke="#ac7626" stroke-width="1.4" stroke-linecap="round"/><path d="M280.9 358.9H277.6V351.3H285.2V353.3" fill="none" stroke="#757575" stroke-width="1.2"/><path d="M277 351.6H285.8" stroke="#757575" stroke-width="1.9"/><rect x="280.9" y="353.9" width="8" height="8.4" fill="none" stroke="#757575" stroke-width="1.2"/><circle cx="303.3" cy="356.5" r="6.1" fill="none" stroke="#757575" stroke-width="1.1"/><path d="M303.3 353.9V359.1" stroke="#757575" stroke-width="1.2"/><path d="M318.1 351.4H329.2" stroke="#757575" stroke-width="1.2"/><path d="M318.1 356.5H329.2" stroke="#757575" stroke-width="1.2"/><path d="M318.1 361.6H329.2" stroke="#757575" stroke-width="1.2"/></svg><div class="abs lbl" style="left:95.2px;top:346.6px;color:#a2a2a2;letter-spacing:-0.245px">Wasserzeichen</div><div class="abs" style="left:61.9px;top:377.4px;width:278.5px;height:34.2px;border-radius:4px;background:#535353"></div><div class="abs" style="left:69px;top:384.7px;width:19.2px;height:19.6px;border-radius:3px;background:#5d5d5d"></div><svg class="abs" style="left:62px;top:377.4px" width="279" height="34.2" viewBox="62 377.4 279 34.2"><circle cx="78.5" cy="394.5" r="6.6" fill="none" stroke="#ac7626" stroke-width="1.4"/><circle cx="78.5" cy="394.5" r="3.7" fill="#c97b08"/><path d="M280.9 396.9H277.6V389.3H285.2V391.3" fill="none" stroke="#757575" stroke-width="1.2"/><path d="M277 389.6H285.8" stroke="#757575" stroke-width="1.9"/><rect x="280.9" y="391.9" width="8" height="8.4" fill="none" stroke="#757575" stroke-width="1.2"/><circle cx="303.3" cy="394.5" r="6.1" fill="none" stroke="#757575" stroke-width="1.1"/><path d="M303.3 391.9V397.1" stroke="#757575" stroke-width="1.2"/><path d="M318.1 389.4H329.2" stroke="#757575" stroke-width="1.2"/><path d="M318.1 394.5H329.2" stroke="#757575" stroke-width="1.2"/><path d="M318.1 399.6H329.2" stroke="#757575" stroke-width="1.2"/></svg><div class="abs lbl" style="left:95.2px;top:384.6px;color:#a2a2a2;letter-spacing:0.093px">Ausgabefarbprofil</div><div class="abs" style="left:61.9px;top:415.4px;width:278.5px;height:34.2px;border-radius:4px;background:#535353"></div><div class="abs" style="left:69px;top:422.7px;width:19.2px;height:19.6px;border-radius:3px;background:#5d5d5d"></div><svg class="abs" style="left:62px;top:415.4px" width="279" height="34.2" viewBox="62 415.4 279 34.2"><path d="M74.68 427.81A6.2 6.2 0 1 0 82.32 427.81" fill="none" stroke="#ac7626" stroke-width="1.4" stroke-linecap="round"/><path d="M78.5 424.90V432.40" stroke="#ac7626" stroke-width="1.4" stroke-linecap="round"/><path d="M280.9 434.9H277.6V427.3H285.2V429.3" fill="none" stroke="#757575" stroke-width="1.2"/><path d="M277 427.6H285.8" stroke="#757575" stroke-width="1.9"/><rect x="280.9" y="429.9" width="8" height="8.4" fill="none" stroke="#757575" stroke-width="1.2"/><circle cx="303.3" cy="432.5" r="6.1" fill="none" stroke="#757575" stroke-width="1.1"/><path d="M303.3 429.9V435.1" stroke="#757575" stroke-width="1.2"/><path d="M318.1 427.4H329.2" stroke="#757575" stroke-width="1.2"/><path d="M318.1 432.5H329.2" stroke="#757575" stroke-width="1.2"/><path d="M318.1 437.6H329.2" stroke="#757575" stroke-width="1.2"/></svg><div class="abs lbl" style="left:95.2px;top:422.6px;color:#a2a2a2;letter-spacing:-0.750px">AgX</div><div class="abs" style="left:61.9px;top:453.4px;width:278.5px;height:34.2px;border-radius:4px;background:#535353"></div><div class="abs" style="left:69px;top:460.7px;width:19.2px;height:19.6px;border-radius:3px;background:#5d5d5d"></div><svg class="abs" style="left:62px;top:453.4px" width="279" height="34.2" viewBox="62 453.4 279 34.2"><path d="M74.68 465.81A6.2 6.2 0 1 0 82.32 465.81" fill="none" stroke="#ac7626" stroke-width="1.4" stroke-linecap="round"/><path d="M78.5 462.90V470.40" stroke="#ac7626" stroke-width="1.4" stroke-linecap="round"/><path d="M280.9 472.9H277.6V465.3H285.2V467.3" fill="none" stroke="#757575" stroke-width="1.2"/><path d="M277 465.6H285.8" stroke="#757575" stroke-width="1.9"/><rect x="280.9" y="467.9" width="8" height="8.4" fill="none" stroke="#757575" stroke-width="1.2"/><circle cx="303.3" cy="470.5" r="6.1" fill="none" stroke="#757575" stroke-width="1.1"/><path d="M303.3 467.9V473.1" stroke="#757575" stroke-width="1.2"/><path d="M318.1 465.4H329.2" stroke="#757575" stroke-width="1.2"/><path d="M318.1 470.5H329.2" stroke="#757575" stroke-width="1.2"/><path d="M318.1 475.6H329.2" stroke="#757575" stroke-width="1.2"/></svg><div class="abs lbl" style="left:95.2px;top:460.6px;color:#a2a2a2;letter-spacing:-0.101px">Farbkalibrierung</div><div class="abs" style="left:61.9px;top:491.4px;width:278.5px;height:34.2px;border-radius:4px;background:#535353"></div><div class="abs" style="left:69px;top:498.7px;width:19.2px;height:19.6px;border-radius:3px;background:#5d5d5d"></div><svg class="abs" style="left:62px;top:491.4px" width="279" height="34.2" viewBox="62 491.4 279 34.2"><circle cx="78.5" cy="508.5" r="6.6" fill="none" stroke="#ac7626" stroke-width="1.4"/><circle cx="78.5" cy="508.5" r="3.7" fill="#c97b08"/><path d="M280.9 510.9H277.6V503.3H285.2V505.3" fill="none" stroke="#757575" stroke-width="1.2"/><path d="M277 503.6H285.8" stroke="#757575" stroke-width="1.9"/><rect x="280.9" y="505.9" width="8" height="8.4" fill="none" stroke="#757575" stroke-width="1.2"/><circle cx="303.3" cy="508.5" r="6.1" fill="none" stroke="#757575" stroke-width="1.1"/><path d="M303.3 505.9V511.1" stroke="#757575" stroke-width="1.2"/><path d="M318.1 503.4H329.2" stroke="#757575" stroke-width="1.2"/><path d="M318.1 508.5H329.2" stroke="#757575" stroke-width="1.2"/><path d="M318.1 513.6H329.2" stroke="#757575" stroke-width="1.2"/></svg><div class="abs lbl" style="left:95.2px;top:498.6px;color:#a2a2a2;letter-spacing:0.149px">Eingabefarbprofil</div><div class="abs" style="left:61.9px;top:529.4px;width:278.5px;height:34.2px;border-radius:4px;background:#535353"></div><div class="abs" style="left:69px;top:536.7px;width:19.2px;height:19.6px;border-radius:3px;background:#5d5d5d"></div><svg class="abs" style="left:62px;top:529.4px" width="279" height="34.2" viewBox="62 529.4 279 34.2"><path d="M74.68 541.81A6.2 6.2 0 1 0 82.32 541.81" fill="none" stroke="#ac7626" stroke-width="1.4" stroke-linecap="round"/><path d="M78.5 538.90V546.40" stroke="#ac7626" stroke-width="1.4" stroke-linecap="round"/><rect x="256.1" y="540.1" width="13.1" height="13" rx="1" fill="#757575"/><circle cx="262.65" cy="546.6" r="4.5" fill="#535353"/><path d="M280.9 548.9H277.6V541.3H285.2V543.3" fill="none" stroke="#757575" stroke-width="1.2"/><path d="M277 541.6H285.8" stroke="#757575" stroke-width="1.9"/><rect x="280.9" y="543.9" width="8" height="8.4" fill="none" stroke="#757575" stroke-width="1.2"/><circle cx="303.3" cy="546.5" r="6.1" fill="none" stroke="#757575" stroke-width="1.1"/><path d="M303.3 543.9V549.1" stroke="#757575" stroke-width="1.2"/><path d="M318.1 541.4H329.2" stroke="#757575" stroke-width="1.2"/><path d="M318.1 546.5H329.2" stroke="#757575" stroke-width="1.2"/><path d="M318.1 551.6H329.2" stroke="#757575" stroke-width="1.2"/></svg><div class="abs lbl" style="left:95.2px;top:536.6px;color:#a2a2a2;letter-spacing:0.028px">Belichtung<span class="dot" style="color:#8e8e8e"> · </span><span class="sub" style="color:#666666">1</span></div><div class="abs" style="left:61.9px;top:567.4px;width:278.5px;height:34.2px;border-radius:4px;background:#535353"></div><div class="abs" style="left:69px;top:574.7px;width:19.2px;height:19.6px;border-radius:3px;background:#5d5d5d"></div><svg class="abs" style="left:62px;top:567.4px" width="279" height="34.2" viewBox="62 567.4 279 34.2"><path d="M74.68 579.81A6.2 6.2 0 1 0 82.32 579.81" fill="none" stroke="#ac7626" stroke-width="1.4" stroke-linecap="round"/><path d="M78.5 576.90V584.40" stroke="#ac7626" stroke-width="1.4" stroke-linecap="round"/><path d="M280.9 586.9H277.6V579.3H285.2V581.3" fill="none" stroke="#757575" stroke-width="1.2"/><path d="M277 579.6H285.8" stroke="#757575" stroke-width="1.9"/><rect x="280.9" y="581.9" width="8" height="8.4" fill="none" stroke="#757575" stroke-width="1.2"/><circle cx="303.3" cy="584.5" r="6.1" fill="none" stroke="#757575" stroke-width="1.1"/><path d="M303.3 581.9V587.1" stroke="#757575" stroke-width="1.2"/><path d="M318.1 579.4H329.2" stroke="#757575" stroke-width="1.2"/><path d="M318.1 584.5H329.2" stroke="#757575" stroke-width="1.2"/><path d="M318.1 589.6H329.2" stroke="#757575" stroke-width="1.2"/></svg><div class="abs lbl" style="left:95.2px;top:574.6px;color:#a2a2a2;letter-spacing:-0.059px">Chromatische Aberrati…</div><div class="abs" style="left:61.9px;top:605.4px;width:278.5px;height:34.2px;border-radius:4px;background:#535353"></div><div class="abs" style="left:69px;top:612.7px;width:19.2px;height:19.6px;border-radius:3px;background:#5d5d5d"></div><svg class="abs" style="left:62px;top:605.4px" width="279" height="34.2" viewBox="62 605.4 279 34.2"><circle cx="78.5" cy="622.5" r="6.6" fill="none" stroke="#ac7626" stroke-width="1.4"/><circle cx="78.5" cy="622.5" r="3.7" fill="#c97b08"/><path d="M280.9 624.9H277.6V617.3H285.2V619.3" fill="none" stroke="#757575" stroke-width="1.2"/><path d="M277 617.6H285.8" stroke="#757575" stroke-width="1.9"/><rect x="280.9" y="619.9" width="8" height="8.4" fill="none" stroke="#757575" stroke-width="1.2"/><circle cx="303.3" cy="622.5" r="6.1" fill="none" stroke="#757575" stroke-width="1.1"/><path d="M303.3 619.9V625.1" stroke="#757575" stroke-width="1.2"/><path d="M318.1 617.4H329.2" stroke="#757575" stroke-width="1.2"/><path d="M318.1 622.5H329.2" stroke="#757575" stroke-width="1.2"/><path d="M318.1 627.6H329.2" stroke="#757575" stroke-width="1.2"/></svg><div class="abs lbl" style="left:95.2px;top:612.6px;color:#a2a2a2;letter-spacing:-0.081px">Entrastern</div><div class="abs" style="left:61.9px;top:643.4px;width:278.5px;height:34.2px;border-radius:4px;background:#535353"></div><div class="abs" style="left:69px;top:650.7px;width:19.2px;height:19.6px;border-radius:3px;background:#5d5d5d"></div><svg class="abs" style="left:62px;top:643.4px" width="279" height="34.2" viewBox="62 643.4 279 34.2"><path d="M74.68 655.81A6.2 6.2 0 1 0 82.32 655.81" fill="none" stroke="#ac7626" stroke-width="1.4" stroke-linecap="round"/><path d="M78.5 652.90V660.40" stroke="#ac7626" stroke-width="1.4" stroke-linecap="round"/><path d="M280.9 662.9H277.6V655.3H285.2V657.3" fill="none" stroke="#757575" stroke-width="1.2"/><path d="M277 655.6H285.8" stroke="#757575" stroke-width="1.9"/><rect x="280.9" y="657.9" width="8" height="8.4" fill="none" stroke="#757575" stroke-width="1.2"/><circle cx="303.3" cy="660.5" r="6.1" fill="none" stroke="#757575" stroke-width="1.1"/><path d="M303.3 657.9V663.1" stroke="#757575" stroke-width="1.2"/><path d="M318.1 655.4H329.2" stroke="#757575" stroke-width="1.2"/><path d="M318.1 660.5H329.2" stroke="#757575" stroke-width="1.2"/><path d="M318.1 665.6H329.2" stroke="#757575" stroke-width="1.2"/></svg><div class="abs lbl" style="left:95.2px;top:650.6px;color:#a2a2a2;letter-spacing:-0.053px">Weißabgleich</div><div class="abs" style="left:61.9px;top:681.4px;width:278.5px;height:34.2px;border-radius:4px;background:#535353"></div><div class="abs" style="left:69px;top:688.7px;width:19.2px;height:19.6px;border-radius:3px;background:#5d5d5d"></div><svg class="abs" style="left:62px;top:681.4px" width="279" height="34.2" viewBox="62 681.4 279 34.2"><circle cx="78.5" cy="698.5" r="6.6" fill="none" stroke="#ac7626" stroke-width="1.4"/><circle cx="78.5" cy="698.5" r="3.7" fill="#c97b08"/><path d="M280.9 700.9H277.6V693.3H285.2V695.3" fill="none" stroke="#757575" stroke-width="1.2"/><path d="M277 693.6H285.8" stroke="#757575" stroke-width="1.9"/><rect x="280.9" y="695.9" width="8" height="8.4" fill="none" stroke="#757575" stroke-width="1.2"/><circle cx="303.3" cy="698.5" r="6.1" fill="none" stroke="#757575" stroke-width="1.1"/><path d="M303.3 695.9V701.1" stroke="#757575" stroke-width="1.2"/><path d="M318.1 693.4H329.2" stroke="#757575" stroke-width="1.2"/><path d="M318.1 698.5H329.2" stroke="#757575" stroke-width="1.2"/><path d="M318.1 703.6H329.2" stroke="#757575" stroke-width="1.2"/></svg><div class="abs lbl" style="left:95.2px;top:688.6px;color:#a2a2a2;letter-spacing:-0.097px">RAW-Schwarz-/Weißp…</div><div class="abs" style="left:342px;top:341px;width:7px;height:520px;border-radius:3px;background:#565656"></div><svg class="abs" style="left:350.1px;top:706px" width="12" height="26" viewBox="349 706 12 26"><path d="M350 709L360.2 719L350 729Z" fill="#a0a0a0"/></svg></div><div class="abs" style="left:268.5px;top:6.3px;width:1.5px;height:1.4px;border-radius:1px;background:#fff;opacity:.75;filter:blur(.3px)"></div></div><div class="panel" style="left:727px;background:#2a2a2a"><div class="tb" style="height:25.8px"></div><svg class="abs tbi" style="left:227.1px;top:0" width="78" height="25.8" viewBox="230 0 78 25.8"><path d="M239.3 10.700000000000001L244.7 16.1L250.1 10.700000000000001" fill="none" stroke="#dcdcdc" stroke-width="1.4"/><path d="M270.3 7.9L275.7 13.3L270.3 18.700000000000003L264.9 13.3Z" fill="none" stroke="#dcdcdc" stroke-width="1.3"/><path d="M291 8.600000000000001L300.4 18.0M300.4 8.600000000000001L291 18.0" fill="none" stroke="#dcdcdc" stroke-width="1.4"/></svg><div class="content" style="left:-55.5px;top:-60.6px"><svg class="hist" width="288.8" height="167.3" viewBox="0 0 288.8 167.3" style="left:61.8px;top:95.3px;background:#262626;overflow:hidden"><defs><radialGradient id="hg3" cx="0.503" cy="0.499" r="0.62" gradientTransform="translate(0 -0.362) scale(1 1.726)"><stop offset="0" stop-color="#2f2f2f"/><stop offset="0.45" stop-color="#2f2f2f" stop-opacity="0.8"/><stop offset="1" stop-color="#2f2f2f" stop-opacity="0"/></radialGradient><linearGradient id="g3_0" gradientUnits="userSpaceOnUse" x1="101.5" y1="21.7" x2="195.7" y2="25.0"><stop offset="0" stop-color="#f02c44"/><stop offset="1" stop-color="#e838e8"/></linearGradient><linearGradient id="g3_1" gradientUnits="userSpaceOnUse" x1="195.7" y1="25.0" x2="226.0" y2="87.6"><stop offset="0" stop-color="#e838e8"/><stop offset="1" stop-color="#4040f4"/></linearGradient><linearGradient id="g3_2" gradientUnits="userSpaceOnUse" x1="226.0" y1="87.6" x2="172.8" y2="143.7"><stop offset="0" stop-color="#4040f4"/><stop offset="1" stop-color="#30d8e4"/></linearGradient><linearGradient id="g3_3" gradientUnits="userSpaceOnUse" x1="172.8" y1="143.7" x2="88.7" y2="139.4"><stop offset="0" stop-color="#30d8e4"/><stop offset="1" stop-color="#34d434"/></linearGradient><linearGradient id="g3_4" gradientUnits="userSpaceOnUse" x1="88.7" y1="139.4" x2="69.4" y2="97.7"><stop offset="0" stop-color="#34d434"/><stop offset="1" stop-color="#e4e434"/></linearGradient><linearGradient id="g3_5" gradientUnits="userSpaceOnUse" x1="69.4" y1="97.7" x2="101.5" y2="21.7"><stop offset="0" stop-color="#e4e434"/><stop offset="1" stop-color="#f02c44"/></linearGradient><filter id="bl3" x="-30%" y="-30%" width="160%" height="160%"><feGaussianBlur stdDeviation="1.1"/></filter><filter id="bs3" x="-30%" y="-30%" width="160%" height="160%"><feGaussianBlur stdDeviation="1"/></filter><filter id="bc3" x="-10%" y="-10%" width="120%" height="120%"><feGaussianBlur stdDeviation="0.4"/></filter></defs><rect width="288.8" height="167.3" fill="url(#hg3)"/><rect x="0.5" y="0.5" width="287.8" height="166.3" fill="none" stroke="#242424"/><circle cx="145.4" cy="83.4" r="60.8" fill="none" stroke="#1c1c1c" stroke-width="1.5" opacity="0.68"/><circle cx="145.4" cy="83.4" r="76.3" fill="none" stroke="#1c1c1c" stroke-width="1.5" opacity="0.68"/><circle cx="145.4" cy="83.4" r="85.6" fill="none" stroke="#1c1c1c" stroke-width="1.5" opacity="0.68"/><g filter="url(#bc3)" opacity="0.6"><path d="M101.5 21.7C130.3 6.4 168.0 7.8 195.7 25.0" fill="none" stroke="url(#g3_0)" stroke-width="1.5"/><path d="M195.7 25.0C213.6 39.5 225.7 64.6 226.0 87.6" fill="none" stroke="url(#g3_1)" stroke-width="1.5"/><path d="M226.0 87.6C216.2 110.3 195.0 132.7 172.8 143.7" fill="none" stroke="url(#g3_2)" stroke-width="1.5"/><path d="M172.8 143.7C147.0 152.9 113.4 151.2 88.7 139.4" fill="none" stroke="url(#g3_3)" stroke-width="1.5"/><path d="M88.7 139.4C77.2 129.5 69.5 112.8 69.4 97.7" fill="none" stroke="url(#g3_4)" stroke-width="1.5"/><path d="M69.4 97.7C68.6 70.5 81.4 40.1 101.5 21.7" fill="none" stroke="url(#g3_5)" stroke-width="1.5"/></g><circle cx="101.5" cy="21.7" r="3" fill="#ff3040" filter="url(#bc3)"/><circle cx="101.5" cy="21.7" r="1.2" fill="#fff" opacity="0.4" filter="url(#bc3)"/><circle cx="195.7" cy="25.0" r="3" fill="#f040f0" filter="url(#bc3)"/><circle cx="195.7" cy="25.0" r="1.2" fill="#fff" opacity="0.4" filter="url(#bc3)"/><circle cx="226.0" cy="87.6" r="3" fill="#4848ff" filter="url(#bc3)"/><circle cx="226.0" cy="87.6" r="1.2" fill="#fff" opacity="0.4" filter="url(#bc3)"/><circle cx="172.8" cy="143.7" r="3" fill="#40e8f0" filter="url(#bc3)"/><circle cx="172.8" cy="143.7" r="1.2" fill="#fff" opacity="0.4" filter="url(#bc3)"/><circle cx="88.7" cy="139.4" r="3" fill="#40e040" filter="url(#bc3)"/><circle cx="88.7" cy="139.4" r="1.2" fill="#fff" opacity="0.4" filter="url(#bc3)"/><circle cx="69.4" cy="97.7" r="3" fill="#f0f040" filter="url(#bc3)"/><circle cx="69.4" cy="97.7" r="1.2" fill="#fff" opacity="0.4" filter="url(#bc3)"/><linearGradient id="bg3" gradientUnits="userSpaceOnUse" x1="-6" y1="-19" x2="4" y2="6"><stop offset="0" stop-color="#f0a593"/><stop offset="0.40" stop-color="#f5c19e"/><stop offset="0.66" stop-color="#f8e4a6"/><stop offset="0.86" stop-color="#e0e678"/><stop offset="1" stop-color="#b4e070"/></linearGradient><g transform="translate(145.4 83.4) scale(0.985 0.93)"><g filter="url(#bl3)"><path d="M-1.5 -1.5C-6 -6 -12 -11.5 -20 -13.6C-26 -15.6 -30 -18.6 -34.6 -18.4C-40 -16.6 -44 -13.6 -45.6 -11.4C-47.5 -9 -48 -7 -47.5 -5.5C-46 -3 -45 -1 -44 0.3C-42.5 0 -41 -0.6 -39.7 -1.2C-37 -2.6 -35 -3.2 -32.4 -3.2C-30 -2.2 -28 -0.6 -27.2 0.5C-25 2.8 -22 4.6 -19.9 4.8C-18 5.1 -16 5.2 -14.7 5.1C-11 4.6 -8 3.9 -5.2 3.4C-3 3.1 -1 2.8 0 2.5Z" fill="url(#bg3)" opacity="0.88"/></g><g filter="url(#bs3)"><path d="M-50.5 -5.8C-48 -3.5 -47 0 -46.4 1.8C-44 1.4 -42 0.5 -40 -0.5L-45 -9Z" fill="#e8c27c" opacity="0.42"/><ellipse cx="-41" cy="-8" rx="6.5" ry="5" fill="#f9dca6" opacity="0.85"/><path d="M-44 -8.5C-34 -12.5 -22 -9 -4 0.6" fill="none" stroke="#fdeab4" stroke-width="2.4" opacity="0.75" stroke-linecap="round"/><path d="M-40 -13.5C-30 -16.5 -18 -11.5 -6 -3.2" fill="none" stroke="#f3a795" stroke-width="2.4" opacity="0.62" stroke-linecap="round"/><path d="M-26 0.5C-20 4.2 -12 4.4 -3 2.2" fill="none" stroke="#dde872" stroke-width="1.9" opacity="0.72" stroke-linecap="round"/><ellipse cx="-3.6" cy="3" rx="3.2" ry="1.1" fill="#5fd890" opacity="0.95"/></g><g filter="url(#bc3)" fill="none" stroke-linecap="round"><path d="M-37 -15.5C-28 -15.5 -18 -11 -9 -4.5" stroke="#e8907c" stroke-width="0.9" opacity="0.5"/><path d="M-42 -11C-32 -13.5 -22 -10.5 -10 -2.5" stroke="#fff2cc" stroke-width="0.9" opacity="0.55"/><path d="M-45.5 -5.5C-36 -8.5 -24 -6 -7 1.2" stroke="#fff0c0" stroke-width="0.9" opacity="0.5"/><path d="M-30 -2.5C-24 0 -16 2.4 -6 2" stroke="#f4e690" stroke-width="0.9" opacity="0.6"/><path d="M-27 1.8C-22 4.6 -15 5.6 -8 4.2" stroke="#c4e060" stroke-width="0.9" opacity="0.6"/><path d="M-46 -3.5L-49.5 -1M-44.5 -0.5L-46.5 2.6M-41.5 -1L-42.5 2M-38.5 -1.6L-39 1M-35 -3L-34.6 -0.8" stroke="#e6c884" stroke-width="0.9" opacity="0.45"/><path d="M-36 -18.6L-33.5 -21.5M-30 -18L-26.5 -19.6M-22 -14.6L-18.5 -15.4" stroke="#f0b098" stroke-width="0.8" opacity="0.3"/></g></g><circle cx="145.4" cy="83.4" r="2.7" fill="#0e0e0e" filter="url(#bc3)"/></svg><div class="abs" style="left:106.6px;top:265.2px;width:35.5px;height:41.2px;border-radius:3px;background:#353535"></div><svg class="abs" style="left:62px;top:265px" width="289" height="42" viewBox="62 265 289 42"><path d="M75.4 280.0H86.9" stroke="#959595" stroke-width="1.5"/><path d="M86.9 280.0H90.6" stroke="#959595" stroke-width="1.1" opacity="0.75"/><path d="M84.80000000000001 280.7L86.9 277.1L89.0 280.7Z" fill="#959595"/><path d="M75.4 286.0H77.7" stroke="#959595" stroke-width="1.5"/><path d="M77.7 286.0H90.6" stroke="#959595" stroke-width="1.1" opacity="0.75"/><path d="M75.60000000000001 286.7L77.7 283.1L79.8 286.7Z" fill="#959595"/><path d="M75.4 292.1H84.0" stroke="#959595" stroke-width="1.5"/><path d="M84.0 292.1H90.6" stroke="#959595" stroke-width="1.1" opacity="0.75"/><path d="M81.9 292.8L84.0 289.20000000000005L86.1 292.8Z" fill="#959595"/><path d="M119.61 280.45A7.3 7.3 0 1 0 128.59 280.45" fill="none" stroke="#e0e0e0" stroke-width="1.5" stroke-linecap="round"/><path d="M124.1 277.30V285.90" stroke="#e0e0e0" stroke-width="1.5" stroke-linecap="round"/><circle cx="165.7" cy="285.8" r="7.2" fill="none" stroke="#585858" stroke-width="1.35"/><defs><linearGradient id="rgb" x1="0" x2="1" y1="0" y2="0"><stop offset="0" stop-color="#b83a2a"/><stop offset="0.16" stop-color="#b04424"/><stop offset="0.29" stop-color="#586c20"/><stop offset="0.40" stop-color="#22a422"/><stop offset="0.60" stop-color="#22a42a"/><stop offset="0.72" stop-color="#206458"/><stop offset="0.83" stop-color="#2444b8"/><stop offset="1" stop-color="#2a40c8"/></linearGradient></defs><circle cx="207.6" cy="285.8" r="7.6" fill="url(#rgb)"/><path d="M243.1 286.40000000000003A7.2 7.2 0 0 1 257.5 285.40000000000003" fill="none" stroke="#585858" stroke-width="1.5"/><path d="M240.4 286.0A7.2 7.2 0 0 0 254.8 286.6" fill="none" stroke="#585858" stroke-width="1.5"/><circle cx="290.5" cy="285.8" r="7.1" fill="none" stroke="#626262" stroke-width="1.5"/><path d="M285.5 281.2L289.9 286.40000000000003M289.9 286.40000000000003L287.9 291.8M289.9 286.40000000000003L294.9 285.0M291.1 279.40000000000003L292.3 283.2M295.1 289.40000000000003L292.5 291.40000000000003" fill="none" stroke="#626262" stroke-width="1.5"/><circle cx="287.3" cy="289.2" r="1.5" fill="#626262"/><circle cx="293.1" cy="282.8" r="1.4" fill="#626262"/><circle cx="286.9" cy="284.2" r="1.2" fill="#626262"/><path d="M324.7 279.2H337.2" stroke="#959595" stroke-width="1.2"/><path d="M324.7 285.5H337.2" stroke="#959595" stroke-width="1.2"/><path d="M324.7 291.7H337.2" stroke="#959595" stroke-width="1.2"/></svg><div class="abs" style="left:66.3px;top:312.3px;width:279.9px;height:21px;border-radius:3px;background:#333333"></div><svg class="abs" style="left:74px;top:314px" width="20" height="20" viewBox="74 314 20 20"><circle cx="82.2" cy="322.1" r="5.3" fill="none" stroke="#8a8a8a" stroke-width="1.1"/><path d="M86 326L90 329.8" stroke="#8a8a8a" stroke-width="1.1"/></svg><div class="abs stxt" style="left:95.7px;top:315.3px;color:#808080">Modul nach Namen oder Stichwort s…</div><div class="abs" style="left:61.9px;top:339.4px;width:278.5px;height:34.2px;border-radius:4px;background:#333333"></div><div class="abs" style="left:69px;top:346.7px;width:19.2px;height:19.6px;border-radius:3px;background:#3b3b3b"></div><svg class="abs" style="left:62px;top:339.4px" width="279" height="34.2" viewBox="62 339.4 279 34.2"><path d="M74.68 351.81A6.2 6.2 0 1 0 82.32 351.81" fill="none" stroke="#b87614" stroke-width="1.4" stroke-linecap="round"/><path d="M78.5 348.90V356.40" stroke="#b87614" stroke-width="1.4" stroke-linecap="round"/><path d="M280.9 358.9H277.6V351.3H285.2V353.3" fill="none" stroke="#8e8e8e" stroke-width="1.2"/><path d="M277 351.6H285.8" stroke="#8e8e8e" stroke-width="1.9"/><rect x="280.9" y="353.9" width="8" height="8.4" fill="none" stroke="#8e8e8e" stroke-width="1.2"/><circle cx="303.3" cy="356.5" r="6.1" fill="none" stroke="#8e8e8e" stroke-width="1.1"/><path d="M303.3 353.9V359.1" stroke="#8e8e8e" stroke-width="1.2"/><path d="M318.1 351.4H329.2" stroke="#8e8e8e" stroke-width="1.2"/><path d="M318.1 356.5H329.2" stroke="#8e8e8e" stroke-width="1.2"/><path d="M318.1 361.6H329.2" stroke="#8e8e8e" stroke-width="1.2"/></svg><div class="abs lbl" style="left:95.2px;top:347.0px;color:#a8a8a8;letter-spacing:-0.245px">Wasserzeichen</div><div class="abs" style="left:61.9px;top:377.4px;width:278.5px;height:34.2px;border-radius:4px;background:#333333"></div><div class="abs" style="left:69px;top:384.7px;width:19.2px;height:19.6px;border-radius:3px;background:#3b3b3b"></div><svg class="abs" style="left:62px;top:377.4px" width="279" height="34.2" viewBox="62 377.4 279 34.2"><circle cx="78.5" cy="394.5" r="6.6" fill="none" stroke="#b87614" stroke-width="1.4"/><circle cx="78.5" cy="394.5" r="3.7" fill="#cf7d00"/><path d="M280.9 396.9H277.6V389.3H285.2V391.3" fill="none" stroke="#8e8e8e" stroke-width="1.2"/><path d="M277 389.6H285.8" stroke="#8e8e8e" stroke-width="1.9"/><rect x="280.9" y="391.9" width="8" height="8.4" fill="none" stroke="#8e8e8e" stroke-width="1.2"/><circle cx="303.3" cy="394.5" r="6.1" fill="none" stroke="#8e8e8e" stroke-width="1.1"/><path d="M303.3 391.9V397.1" stroke="#8e8e8e" stroke-width="1.2"/><path d="M318.1 389.4H329.2" stroke="#8e8e8e" stroke-width="1.2"/><path d="M318.1 394.5H329.2" stroke="#8e8e8e" stroke-width="1.2"/><path d="M318.1 399.6H329.2" stroke="#8e8e8e" stroke-width="1.2"/></svg><div class="abs lbl" style="left:95.2px;top:385.0px;color:#a8a8a8;letter-spacing:0.093px">Ausgabefarbprofil</div><div class="abs" style="left:61.9px;top:415.4px;width:278.5px;height:34.2px;border-radius:4px;background:#333333"></div><div class="abs" style="left:69px;top:422.7px;width:19.2px;height:19.6px;border-radius:3px;background:#3b3b3b"></div><svg class="abs" style="left:62px;top:415.4px" width="279" height="34.2" viewBox="62 415.4 279 34.2"><path d="M74.68 427.81A6.2 6.2 0 1 0 82.32 427.81" fill="none" stroke="#b87614" stroke-width="1.4" stroke-linecap="round"/><path d="M78.5 424.90V432.40" stroke="#b87614" stroke-width="1.4" stroke-linecap="round"/><path d="M280.9 434.9H277.6V427.3H285.2V429.3" fill="none" stroke="#8e8e8e" stroke-width="1.2"/><path d="M277 427.6H285.8" stroke="#8e8e8e" stroke-width="1.9"/><rect x="280.9" y="429.9" width="8" height="8.4" fill="none" stroke="#8e8e8e" stroke-width="1.2"/><circle cx="303.3" cy="432.5" r="6.1" fill="none" stroke="#8e8e8e" stroke-width="1.1"/><path d="M303.3 429.9V435.1" stroke="#8e8e8e" stroke-width="1.2"/><path d="M318.1 427.4H329.2" stroke="#8e8e8e" stroke-width="1.2"/><path d="M318.1 432.5H329.2" stroke="#8e8e8e" stroke-width="1.2"/><path d="M318.1 437.6H329.2" stroke="#8e8e8e" stroke-width="1.2"/></svg><div class="abs lbl" style="left:95.2px;top:423.0px;color:#a8a8a8;letter-spacing:-0.750px">AgX</div><div class="abs" style="left:61.9px;top:453.4px;width:278.5px;height:34.2px;border-radius:4px;background:#333333"></div><div class="abs" style="left:69px;top:460.7px;width:19.2px;height:19.6px;border-radius:3px;background:#3b3b3b"></div><svg class="abs" style="left:62px;top:453.4px" width="279" height="34.2" viewBox="62 453.4 279 34.2"><path d="M74.68 465.81A6.2 6.2 0 1 0 82.32 465.81" fill="none" stroke="#b87614" stroke-width="1.4" stroke-linecap="round"/><path d="M78.5 462.90V470.40" stroke="#b87614" stroke-width="1.4" stroke-linecap="round"/><path d="M280.9 472.9H277.6V465.3H285.2V467.3" fill="none" stroke="#8e8e8e" stroke-width="1.2"/><path d="M277 465.6H285.8" stroke="#8e8e8e" stroke-width="1.9"/><rect x="280.9" y="467.9" width="8" height="8.4" fill="none" stroke="#8e8e8e" stroke-width="1.2"/><circle cx="303.3" cy="470.5" r="6.1" fill="none" stroke="#8e8e8e" stroke-width="1.1"/><path d="M303.3 467.9V473.1" stroke="#8e8e8e" stroke-width="1.2"/><path d="M318.1 465.4H329.2" stroke="#8e8e8e" stroke-width="1.2"/><path d="M318.1 470.5H329.2" stroke="#8e8e8e" stroke-width="1.2"/><path d="M318.1 475.6H329.2" stroke="#8e8e8e" stroke-width="1.2"/></svg><div class="abs lbl" style="left:95.2px;top:461.0px;color:#a8a8a8;letter-spacing:-0.101px">Farbkalibrierung</div><div class="abs" style="left:61.9px;top:491.4px;width:278.5px;height:34.2px;border-radius:4px;background:#333333"></div><div class="abs" style="left:69px;top:498.7px;width:19.2px;height:19.6px;border-radius:3px;background:#3b3b3b"></div><svg class="abs" style="left:62px;top:491.4px" width="279" height="34.2" viewBox="62 491.4 279 34.2"><circle cx="78.5" cy="508.5" r="6.6" fill="none" stroke="#b87614" stroke-width="1.4"/><circle cx="78.5" cy="508.5" r="3.7" fill="#cf7d00"/><path d="M280.9 510.9H277.6V503.3H285.2V505.3" fill="none" stroke="#8e8e8e" stroke-width="1.2"/><path d="M277 503.6H285.8" stroke="#8e8e8e" stroke-width="1.9"/><rect x="280.9" y="505.9" width="8" height="8.4" fill="none" stroke="#8e8e8e" stroke-width="1.2"/><circle cx="303.3" cy="508.5" r="6.1" fill="none" stroke="#8e8e8e" stroke-width="1.1"/><path d="M303.3 505.9V511.1" stroke="#8e8e8e" stroke-width="1.2"/><path d="M318.1 503.4H329.2" stroke="#8e8e8e" stroke-width="1.2"/><path d="M318.1 508.5H329.2" stroke="#8e8e8e" stroke-width="1.2"/><path d="M318.1 513.6H329.2" stroke="#8e8e8e" stroke-width="1.2"/></svg><div class="abs lbl" style="left:95.2px;top:499.0px;color:#a8a8a8;letter-spacing:0.149px">Eingabefarbprofil</div><div class="abs" style="left:61.9px;top:529.4px;width:278.5px;height:34.2px;border-radius:4px;background:#333333"></div><div class="abs" style="left:69px;top:536.7px;width:19.2px;height:19.6px;border-radius:3px;background:#3b3b3b"></div><svg class="abs" style="left:62px;top:529.4px" width="279" height="34.2" viewBox="62 529.4 279 34.2"><path d="M74.68 541.81A6.2 6.2 0 1 0 82.32 541.81" fill="none" stroke="#b87614" stroke-width="1.4" stroke-linecap="round"/><path d="M78.5 538.90V546.40" stroke="#b87614" stroke-width="1.4" stroke-linecap="round"/><rect x="256.1" y="540.1" width="13.1" height="13" rx="1" fill="#8e8e8e"/><circle cx="262.65" cy="546.6" r="4.5" fill="#333333"/><path d="M280.9 548.9H277.6V541.3H285.2V543.3" fill="none" stroke="#8e8e8e" stroke-width="1.2"/><path d="M277 541.6H285.8" stroke="#8e8e8e" stroke-width="1.9"/><rect x="280.9" y="543.9" width="8" height="8.4" fill="none" stroke="#8e8e8e" stroke-width="1.2"/><circle cx="303.3" cy="546.5" r="6.1" fill="none" stroke="#8e8e8e" stroke-width="1.1"/><path d="M303.3 543.9V549.1" stroke="#8e8e8e" stroke-width="1.2"/><path d="M318.1 541.4H329.2" stroke="#8e8e8e" stroke-width="1.2"/><path d="M318.1 546.5H329.2" stroke="#8e8e8e" stroke-width="1.2"/><path d="M318.1 551.6H329.2" stroke="#8e8e8e" stroke-width="1.2"/></svg><div class="abs lbl" style="left:95.2px;top:537.0px;color:#a8a8a8;letter-spacing:0.028px">Belichtung<span class="dot" style="color:#909090"> · </span><span class="sub" style="color:#4a4a4a">1</span></div><div class="abs" style="left:61.9px;top:567.4px;width:278.5px;height:34.2px;border-radius:4px;background:#333333"></div><div class="abs" style="left:69px;top:574.7px;width:19.2px;height:19.6px;border-radius:3px;background:#2d2d2d"></div><svg class="abs" style="left:62px;top:567.4px" width="279" height="34.2" viewBox="62 567.4 279 34.2"><path d="M74.68 579.81A6.2 6.2 0 1 0 82.32 579.81" fill="none" stroke="#565656" stroke-width="1.3" stroke-linecap="round"/><path d="M78.5 576.90V584.40" stroke="#565656" stroke-width="1.3" stroke-linecap="round"/><rect x="274" y="575.0" width="18" height="18.8" rx="2.5" fill="#2d2d2d"/><rect x="294.1" y="575.0" width="18.2" height="18.8" rx="2.5" fill="#2d2d2d"/><rect x="314.8" y="575.0" width="17.7" height="18.8" rx="2.5" fill="#2d2d2d"/><path d="M280.9 586.9H277.6V579.3H285.2V581.3" fill="none" stroke="#5a5a5a" stroke-width="1.2"/><path d="M277 579.6H285.8" stroke="#5a5a5a" stroke-width="1.9"/><rect x="280.9" y="581.9" width="8" height="8.4" fill="none" stroke="#5a5a5a" stroke-width="1.2"/><circle cx="303.3" cy="584.5" r="6.1" fill="none" stroke="#5a5a5a" stroke-width="1.1"/><path d="M303.3 581.9V587.1" stroke="#5a5a5a" stroke-width="1.2"/><path d="M318.1 579.4H329.2" stroke="#5a5a5a" stroke-width="1.2"/><path d="M318.1 584.5H329.2" stroke="#5a5a5a" stroke-width="1.2"/><path d="M318.1 589.6H329.2" stroke="#5a5a5a" stroke-width="1.2"/></svg><div class="abs lbl" style="left:95.2px;top:575.0px;color:#a8a8a8;letter-spacing:-0.182px">Ausrichtung<span class="dot" style="color:#909090"> · </span><span class="sub" style="color:#4a4a4a">auto</span></div><div class="abs" style="left:61.9px;top:605.4px;width:278.5px;height:34.2px;border-radius:4px;background:#333333"></div><div class="abs" style="left:69px;top:612.7px;width:19.2px;height:19.6px;border-radius:3px;background:#3b3b3b"></div><svg class="abs" style="left:62px;top:605.4px" width="279" height="34.2" viewBox="62 605.4 279 34.2"><path d="M74.68 617.81A6.2 6.2 0 1 0 82.32 617.81" fill="none" stroke="#b87614" stroke-width="1.4" stroke-linecap="round"/><path d="M78.5 614.90V622.40" stroke="#b87614" stroke-width="1.4" stroke-linecap="round"/><path d="M280.9 624.9H277.6V617.3H285.2V619.3" fill="none" stroke="#8e8e8e" stroke-width="1.2"/><path d="M277 617.6H285.8" stroke="#8e8e8e" stroke-width="1.9"/><rect x="280.9" y="619.9" width="8" height="8.4" fill="none" stroke="#8e8e8e" stroke-width="1.2"/><circle cx="303.3" cy="622.5" r="6.1" fill="none" stroke="#8e8e8e" stroke-width="1.1"/><path d="M303.3 619.9V625.1" stroke="#8e8e8e" stroke-width="1.2"/><path d="M318.1 617.4H329.2" stroke="#8e8e8e" stroke-width="1.2"/><path d="M318.1 622.5H329.2" stroke="#8e8e8e" stroke-width="1.2"/><path d="M318.1 627.6H329.2" stroke="#8e8e8e" stroke-width="1.2"/></svg><div class="abs lbl" style="left:95.2px;top:613.0px;color:#a8a8a8;letter-spacing:-0.059px">Chromatische Aberrati…</div><div class="abs" style="left:61.9px;top:643.4px;width:278.5px;height:34.2px;border-radius:4px;background:#333333"></div><div class="abs" style="left:69px;top:650.7px;width:19.2px;height:19.6px;border-radius:3px;background:#3b3b3b"></div><svg class="abs" style="left:62px;top:643.4px" width="279" height="34.2" viewBox="62 643.4 279 34.2"><circle cx="78.5" cy="660.5" r="6.6" fill="none" stroke="#b87614" stroke-width="1.4"/><circle cx="78.5" cy="660.5" r="3.7" fill="#cf7d00"/><path d="M280.9 662.9H277.6V655.3H285.2V657.3" fill="none" stroke="#8e8e8e" stroke-width="1.2"/><path d="M277 655.6H285.8" stroke="#8e8e8e" stroke-width="1.9"/><rect x="280.9" y="657.9" width="8" height="8.4" fill="none" stroke="#8e8e8e" stroke-width="1.2"/><circle cx="303.3" cy="660.5" r="6.1" fill="none" stroke="#8e8e8e" stroke-width="1.1"/><path d="M303.3 657.9V663.1" stroke="#8e8e8e" stroke-width="1.2"/><path d="M318.1 655.4H329.2" stroke="#8e8e8e" stroke-width="1.2"/><path d="M318.1 660.5H329.2" stroke="#8e8e8e" stroke-width="1.2"/><path d="M318.1 665.6H329.2" stroke="#8e8e8e" stroke-width="1.2"/></svg><div class="abs lbl" style="left:95.2px;top:651.0px;color:#a8a8a8;letter-spacing:-0.081px">Entrastern</div><div class="abs" style="left:61.9px;top:681.4px;width:278.5px;height:34.2px;border-radius:4px;background:#333333"></div><div class="abs" style="left:69px;top:688.7px;width:19.2px;height:19.6px;border-radius:3px;background:#3b3b3b"></div><svg class="abs" style="left:62px;top:681.4px" width="279" height="34.2" viewBox="62 681.4 279 34.2"><path d="M74.68 693.81A6.2 6.2 0 1 0 82.32 693.81" fill="none" stroke="#b87614" stroke-width="1.4" stroke-linecap="round"/><path d="M78.5 690.90V698.40" stroke="#b87614" stroke-width="1.4" stroke-linecap="round"/><path d="M280.9 700.9H277.6V693.3H285.2V695.3" fill="none" stroke="#8e8e8e" stroke-width="1.2"/><path d="M277 693.6H285.8" stroke="#8e8e8e" stroke-width="1.9"/><rect x="280.9" y="695.9" width="8" height="8.4" fill="none" stroke="#8e8e8e" stroke-width="1.2"/><circle cx="303.3" cy="698.5" r="6.1" fill="none" stroke="#8e8e8e" stroke-width="1.1"/><path d="M303.3 695.9V701.1" stroke="#8e8e8e" stroke-width="1.2"/><path d="M318.1 693.4H329.2" stroke="#8e8e8e" stroke-width="1.2"/><path d="M318.1 698.5H329.2" stroke="#8e8e8e" stroke-width="1.2"/><path d="M318.1 703.6H329.2" stroke="#8e8e8e" stroke-width="1.2"/></svg><div class="abs lbl" style="left:95.2px;top:689.0px;color:#a8a8a8;letter-spacing:-0.053px">Weißabgleich</div><div class="abs" style="left:61.9px;top:719.4px;width:278.5px;height:34.2px;border-radius:4px;background:#333333"></div><div class="abs" style="left:69px;top:726.7px;width:19.2px;height:19.6px;border-radius:3px;background:#3b3b3b"></div><svg class="abs" style="left:62px;top:719.4px" width="279" height="34.2" viewBox="62 719.4 279 34.2"><circle cx="78.5" cy="736.5" r="6.6" fill="none" stroke="#b87614" stroke-width="1.4"/><circle cx="78.5" cy="736.5" r="3.7" fill="#cf7d00"/><path d="M280.9 738.9H277.6V731.3H285.2V733.3" fill="none" stroke="#8e8e8e" stroke-width="1.2"/><path d="M277 731.6H285.8" stroke="#8e8e8e" stroke-width="1.9"/><rect x="280.9" y="733.9" width="8" height="8.4" fill="none" stroke="#8e8e8e" stroke-width="1.2"/><circle cx="303.3" cy="736.5" r="6.1" fill="none" stroke="#8e8e8e" stroke-width="1.1"/><path d="M303.3 733.9V739.1" stroke="#8e8e8e" stroke-width="1.2"/><path d="M318.1 731.4H329.2" stroke="#8e8e8e" stroke-width="1.2"/><path d="M318.1 736.5H329.2" stroke="#8e8e8e" stroke-width="1.2"/><path d="M318.1 741.6H329.2" stroke="#8e8e8e" stroke-width="1.2"/></svg><div class="abs lbl" style="left:95.2px;top:727.0px;color:#a8a8a8;letter-spacing:-0.097px">RAW-Schwarz-/Weißp…</div><div class="abs" style="left:342px;top:341px;width:7px;height:520px;border-radius:3px;background:#333333"></div><svg class="abs" style="left:349.9px;top:706px" width="12" height="26" viewBox="349 706 12 26"><path d="M350 709L360.2 719L350 729Z" fill="#9c9c9c"/></svg></div><div class="abs" style="left:306.1px;top:25.8px;width:1.8px;height:760px;background:#a6a6a6"></div><div class="abs" style="left:307.9px;top:25.8px;width:.2px;height:760px;background:#222"></div></div></body></html>
